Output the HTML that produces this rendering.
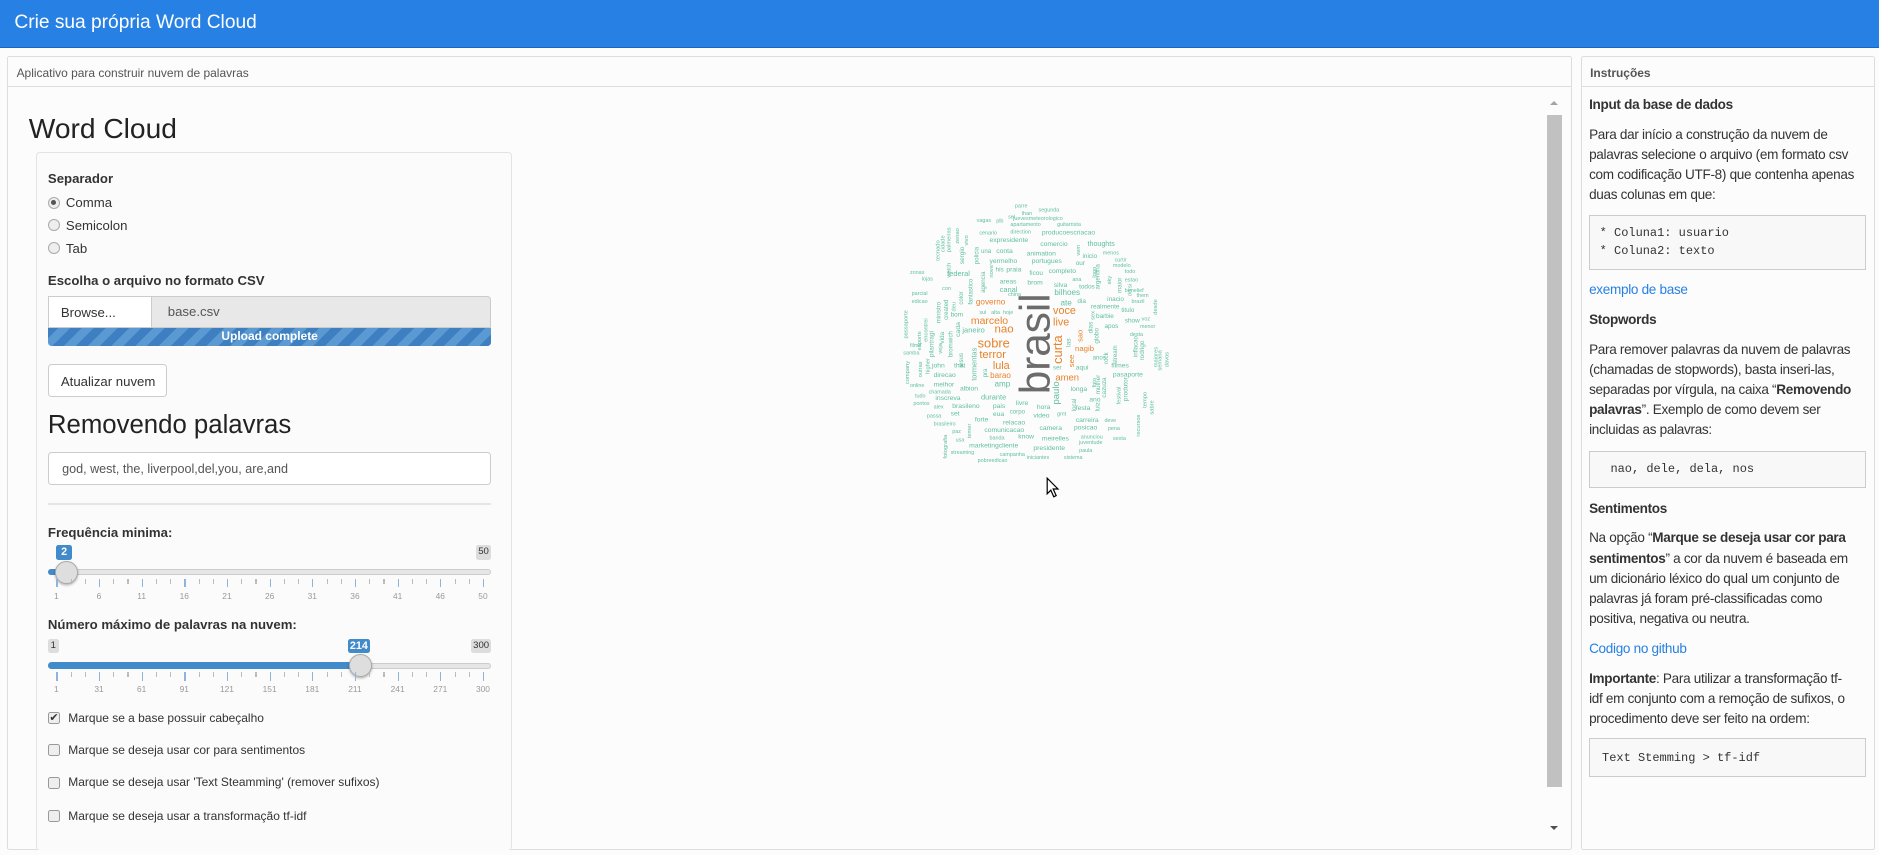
<!DOCTYPE html>
<html><head><meta charset="utf-8"><style>
*{box-sizing:border-box;margin:0;padding:0}
html,body{width:1879px;height:855px;overflow:hidden;background:#fcfcfc}
#w{zoom:1.1984;width:1568px;height:714px;position:relative;font-family:"Liberation Sans",Arial,sans-serif;color:#333}
.a{position:absolute;white-space:nowrap}
.nav{left:0;top:0;width:1568px;height:40px;background:#2780e3;border-bottom:1px solid #1967be}
.nav span{position:absolute;left:12px;top:10px;color:#fff;font-size:16px}
.panel{border:1px solid #ddd;background:#fcfcfc;border-radius:2px}
.ph{position:absolute;left:0;right:0;top:0;height:25px;border-bottom:1px solid #ddd;font-size:10px;color:#555;padding:7px 0 0 7px}
.b{font-weight:bold;font-size:11px}
.t{font-size:11px}
.rad{width:10px;height:10px;border:1px solid #aaa;border-radius:50%;background:#eee}
.chk{width:10px;height:10px;border:1px solid #999;border-radius:2px;background:#eee}
.tick{position:absolute;width:1px}
.tl{position:absolute;font-size:7px;color:#999;transform:translateX(-50%)}
.ins{font-family:"Liberation Sans",sans-serif;font-size:11.3px;letter-spacing:-0.25px;color:#333;line-height:16.7px}
.pre{border:1px solid #ccc;background:#f8f8f8;font-family:"Liberation Mono",monospace;font-size:10px;color:#333}
</style></head><body><div id="w">
<div class="a nav"><span>Crie sua própria Word Cloud</span></div>

<div class="a panel" style="left:6px;top:47px;width:1306px;height:662px">
<div class="ph">Aplicativo para construir nuvem de palavras</div>
</div>
<div class="a" style="left:24px;top:94px;font-size:23.5px;color:#222">Word Cloud</div>
<div class="a" style="left:30px;top:127px;width:397px;height:582px;border:1px solid #e3e3e3;border-bottom:none;border-radius:3px;background:#fbfbfb"></div>

<div class="a b" style="left:40px;top:143px">Separador</div>
<div class="a rad" style="left:40px;top:164px"><div style="width:4px;height:4px;background:#555;border-radius:50%;margin:2px"></div></div>
<div class="a t" style="left:55px;top:163px">Comma</div>
<div class="a rad" style="left:40px;top:183px"></div><div class="a t" style="left:55px;top:182px">Semicolon</div>
<div class="a rad" style="left:40px;top:202px"></div><div class="a t" style="left:55px;top:201px">Tab</div>
<div class="a b" style="left:40px;top:228px">Escolha o arquivo no formato CSV</div>
<div class="a" style="left:40px;top:247px;width:370px;height:27px;border:1px solid #ccc;background:#e8e8e8;border-radius:3px 3px 0 0"></div>
<div class="a t" style="left:40px;top:247px;width:87px;height:27px;border:1px solid #ccc;background:#fff;padding:7px 0 0 10px">Browse...</div>
<div class="a t" style="left:140px;top:254px;color:#555">base.csv</div>
<div class="a" style="left:40px;top:274px;width:370px;height:15px;border-radius:0 0 3px 3px;background:repeating-linear-gradient(-45deg,#3d7fc0 0 7px,#5b99d3 7px 14px);color:#fff;font-size:10px;font-weight:bold;text-align:center;line-height:15px">Upload complete</div>
<div class="a t" style="left:40px;top:304px;width:99px;height:27px;border:1px solid #ccc;background:#fff;border-radius:3px;padding:7px 0 0 10px">Atualizar nuvem</div>
<div class="a" style="left:40px;top:343px;font-size:21.5px;color:#222">Removendo palavras</div>
<div class="a t" style="left:40px;top:377px;width:370px;height:28px;border:1px solid #ccc;border-radius:3px;background:#fff;padding:8px 0 0 11px;color:#555;font-size:10.5px">god, west, the, liverpool,del,you, are,and</div>
<div class="a" style="left:40px;top:420px;width:370px;height:1px;background:#e5e5e5"></div>

<div class="a b" style="left:40px;top:438px">Frequência minima:</div>
<div class="a" style="left:47px;top:455px;width:13px;height:12px;background:#428bca;color:#fff;font-size:9px;font-weight:bold;text-align:center;line-height:12px;border-radius:2px">2</div>
<div class="a" style="left:397px;top:455px;width:13px;height:12px;background:#ddd;color:#333;font-size:8px;text-align:center;line-height:12px;border-radius:2px">50</div>
<div class="a" style="left:40px;top:475px;width:370px;height:5px;background:#e6e6e6;border:1px solid #ccc;border-radius:3px"></div>
<div class="a" style="left:40px;top:475px;width:15px;height:5px;background:#428bca;border-radius:3px"></div>
<div class="a" style="left:46px;top:468px;width:19px;height:19px;border-radius:50%;background:#dedede;border:1px solid #aaa;box-shadow:0 1px 2px rgba(0,0,0,.3)"></div>

<div class="a b" style="left:40px;top:515px">Número máximo de palavras na nuvem:</div>
<div class="a" style="left:40px;top:533px;width:9px;height:12px;background:#ddd;font-size:8px;text-align:center;line-height:12px;border-radius:2px">1</div>
<div class="a" style="left:290px;top:533px;width:19px;height:12px;background:#428bca;color:#fff;font-size:9px;font-weight:bold;text-align:center;line-height:12px;border-radius:2px">214</div>
<div class="a" style="left:393px;top:533px;width:17px;height:12px;background:#ddd;font-size:8px;text-align:center;line-height:12px;border-radius:2px">300</div>
<div class="a" style="left:40px;top:553px;width:370px;height:5px;background:#e6e6e6;border:1px solid #ccc;border-radius:3px"></div>
<div class="a" style="left:40px;top:552px;width:261px;height:6px;background:#428bca;border-radius:3px"></div>
<div class="a" style="left:291px;top:546px;width:19px;height:19px;border-radius:50%;background:#dedede;border:1px solid #aaa;box-shadow:0 1px 2px rgba(0,0,0,.3)"></div>

<div id="ticks"></div>

<div class="a chk" style="left:40px;top:594px;text-align:center;font-size:9px;line-height:9px">✔</div><div class="a t" style="left:57px;top:593px;font-size:10px">Marque se a base possuir cabeçalho</div>
<div class="a chk" style="left:40px;top:621px"></div><div class="a t" style="left:57px;top:620px;font-size:10px">Marque se deseja usar cor para sentimentos</div>
<div class="a chk" style="left:40px;top:648px"></div><div class="a t" style="left:57px;top:647px;font-size:10px">Marque se deseja usar 'Text Steamming' (remover sufixos)</div>
<div class="a chk" style="left:40px;top:676px"></div><div class="a t" style="left:57px;top:675px;font-size:10px">Marque se deseja usar a transformação tf-idf</div>

<div class="a" style="left:1291px;top:96px;width:12px;height:561px;background:#c1c1c1"></div>
<div class="a" style="left:1293px;top:84px;width:0;height:0;border-left:4px solid transparent;border-right:4px solid transparent;border-bottom:4px solid #a3a3a3"></div>
<div class="a" style="left:1293px;top:689px;width:0;height:0;border-left:4px solid transparent;border-right:4px solid transparent;border-top:4px solid #505050"></div>

<svg class="a" style="left:873px;top:398px" width="12" height="18" viewBox="0 0 12 18"><path d="M1 1 L1 14 L4 11 L6.5 16.5 L8.5 15.5 L6 10 L10 10 Z" fill="#fff" stroke="#000" stroke-width="1"/></svg>

<svg class="a" style="left:741px;top:157px" width="254" height="254" viewBox="0 0 900 900" font-family="Liberation Sans,Arial,sans-serif">
<g fill="#5fbf9f" font-size="16">
<text x="375" y="58">parre</text><text x="445" y="70">segunda</text><text x="395" y="80">than</text><text x="262" y="100">vagas</text><text x="320" y="102">plb</text><text x="355" y="90">sel</text><text x="370" y="95">juevesmeteorologico</text><text x="362" y="112">apartamento</text><text x="500" y="112">guitarrista</text><text x="270" y="137">cenario</text><text x="362" y="134">direction</text><text x="455" y="137" font-size="20">producoescriacao</text><text x="300" y="160" font-size="20">expresidente</text><text x="450" y="172" font-size="20">comercio</text><text x="590" y="172" font-size="21">thoughts</text><text x="275" y="192" font-size="18">una</text><text x="320" y="192" font-size="20">conta</text><text x="410" y="200" font-size="20">animation</text><text x="575" y="207" font-size="19">inicio</text><text x="635" y="197">menos</text><text x="555" y="227" font-size="19">our</text><text x="670" y="217">curtir</text><text x="300" y="222" font-size="20">yermelho</text><text x="425" y="222" font-size="20">portugues</text><text x="665" y="234">modelo</text><text x="318" y="247" font-size="19">his</text><text x="350" y="247" font-size="20">praia</text><text x="418" y="257" font-size="19">ficou</text><text x="475" y="252" font-size="20">completo</text><text x="700" y="252">todo</text><text x="175" y="260" font-size="22">federal</text><text x="65" y="255">zonas</text><text x="100" y="274">lojas</text><text x="330" y="282" font-size="20">areas</text><text x="412" y="285" font-size="20">brom</text><text x="490" y="292" font-size="20">silva</text><text x="565" y="297" font-size="19">todos</text><text x="545" y="275">ana</text><text x="700" y="277">estao</text><text x="330" y="307" font-size="22">canal</text><text x="492" y="317" font-size="24">bilhoes</text><text x="700" y="307">benelief</text><text x="735" y="322">them</text><text x="70" y="317">parcial</text><text x="160" y="302">con</text><text x="720" y="340">brazil</text><text x="70" y="340">edicao</text><text x="510" y="347" font-size="24">ate</text><text x="560" y="340" font-size="19">dia</text><text x="648" y="334" font-size="19">inacio</text><text x="600" y="357" font-size="19">realmente</text><text x="690" y="367" font-size="18">titulo</text><text x="270" y="372">sul</text><text x="305" y="372">alta</text><text x="340" y="372">hoje</text><text x="355" y="320">china</text><text x="185" y="380" font-size="19">bom</text><text x="615" y="385" font-size="19">barbie</text><text x="700" y="397" font-size="19">show</text><text x="640" y="414" font-size="19">apos</text><text x="750" y="392">voz</text><text x="220" y="427" font-size="22">janeiro</text><text x="745" y="414">menor</text><text x="715" y="437">desta</text><text x="605" y="507" font-size="18">anos</text><text x="660" y="530" font-size="20">filmes</text><text x="195" y="530" font-size="20">that</text><text x="130" y="530" font-size="20">john</text><text x="555" y="537" font-size="20">aqui</text><text x="488" y="537" font-size="18">ser</text><text x="65" y="470">filme</text><text x="45" y="492">samba</text><text x="665" y="557" font-size="20">pasaporte</text><text x="135" y="559" font-size="20">direcao</text><text x="315" y="587" font-size="24">amp</text><text x="135" y="587" font-size="20">melhor</text><text x="213" y="599" font-size="20">albion</text><text x="540" y="600" font-size="20">longa</text><text x="65" y="589">online</text><text x="80" y="619">tudo</text><text x="120" y="607">chamada</text><text x="275" y="625" font-size="22">durante</text><text x="140" y="627" font-size="20">inscreva</text><text x="595" y="632" font-size="20">ano</text><text x="75" y="642">pontos</text><text x="190" y="650" font-size="20">brasileno</text><text x="310" y="650" font-size="20">pais</text><text x="378" y="642" font-size="20">livre</text><text x="440" y="654" font-size="20">hora</text><text x="555" y="657" font-size="20">festa</text><text x="135" y="652">alex</text><text x="185" y="672" font-size="20">set</text><text x="310" y="674" font-size="20">eua</text><text x="360" y="667" font-size="18">corpo</text><text x="430" y="679" font-size="20">video</text><text x="500" y="672">gmt</text><text x="555" y="692" font-size="20">carreira</text><text x="115" y="679">passa</text><text x="257" y="690" font-size="20">forte</text><text x="340" y="700" font-size="20">relacao</text><text x="640" y="692">deve</text><text x="448" y="715" font-size="20">camera</text><text x="550" y="714" font-size="20">posicao</text><text x="650" y="715">pena</text><text x="135" y="702">brasileiro</text><text x="285" y="722" font-size="20">comunicacao</text><text x="190" y="724">paz</text><text x="385" y="740" font-size="20">know</text><text x="200" y="750">usa</text><text x="455" y="747" font-size="20">meirelles</text><text x="570" y="740">anunciou</text><text x="665" y="745">sexta</text><text x="300" y="744">banda</text><text x="240" y="767" font-size="20">marketingcliente</text><text x="430" y="774" font-size="20">presidente</text><text x="565" y="757">juventude</text><text x="565" y="780">paula</text><text x="185" y="787">streaming</text><text x="330" y="792">campanha</text><text x="520" y="802">sistema</text><text x="410" y="802">iniciantes</text><text x="265" y="810">pobreedicao</text>
</g>
<g fill="#5fbf9f" font-size="17">
<text transform="translate(267,225) rotate(-90)" font-size="18">policia</text><text transform="translate(225,225) rotate(-90)" font-size="19">sergio</text><text transform="translate(237,170) rotate(-90)">vivo</text><text transform="translate(210,165) rotate(-90)">zenao</text><text transform="translate(185,190) rotate(-90)">palmeiras</text><text transform="translate(167,190) rotate(-90)">cidade</text><text transform="translate(153,215) rotate(-90)">tecnado</text><text transform="translate(185,265) rotate(-90)">watch</text><text transform="translate(155,400) rotate(-90)" font-size="18">ministro</text><text transform="translate(222,345) rotate(-90)" font-size="18">color</text><text transform="translate(200,365) rotate(-90)">deu</text><text transform="translate(250,345) rotate(-90)" font-size="18">fantastico</text><text transform="translate(287,310) rotate(-90)" font-size="18">agencia</text><text transform="translate(178,390) rotate(-90)" font-size="18">created</text><text transform="translate(292,560) rotate(-90)" font-size="18">pra</text><text transform="translate(222,530) rotate(-90)" font-size="18">jesus</text><text transform="translate(213,440) rotate(-90)" font-size="20">cada</text><text transform="translate(165,460) rotate(-90)" font-size="19">vida</text><text transform="translate(117,455) rotate(-90)">encontrei</text><text transform="translate(97,480) rotate(-90)">esporte</text><text transform="translate(57,445) rotate(-90)">passaporte</text><text transform="translate(135,500) rotate(-90)" font-size="19">pilantragi</text><text transform="translate(160,490) rotate(-90)">veja</text><text transform="translate(190,500) rotate(-90)" font-size="18">bromwich</text><text transform="translate(100,560) rotate(-90)">outras</text><text transform="translate(122,550) rotate(-90)">higher</text><text transform="translate(62,580) rotate(-90)">company</text><text transform="translate(625,300) rotate(-90)" font-size="18">argentina</text><text transform="translate(615,265) rotate(-90)">logo</text><text transform="translate(605,430) rotate(-90)" font-size="19">dias</text><text transform="translate(610,390) rotate(-90)">sex</text><text transform="translate(622,460) rotate(-90)" font-size="19">globo</text><text transform="translate(650,520) rotate(-90)" font-size="18">rock</text><text transform="translate(677,520) rotate(-90)" font-size="18">stream</text><text transform="translate(627,610) rotate(-90)" font-size="19">mulher</text><text transform="translate(645,620) rotate(-90)" font-size="19">cazuza</text><text transform="translate(625,660) rotate(-90)" font-size="18">luiz</text><text transform="translate(708,630) rotate(-90)" font-size="19">produtor</text><text transform="translate(687,640) rotate(-90)">festival</text><text transform="translate(737,500) rotate(-90)" font-size="18">inflacao</text><text transform="translate(757,510) rotate(-90)" font-size="19">rodrigo</text><text transform="translate(175,800) rotate(-90)">fotografia</text><text transform="translate(245,740) rotate(-90)">temer</text><text transform="translate(556,660) rotate(-90)" font-size="18">local</text><text transform="translate(615,590) rotate(-90)">foto</text><text transform="translate(745,735) rotate(-90)">recursos</text><text transform="translate(785,670) rotate(-90)">sabre</text><text transform="translate(765,650) rotate(-90)">tempo</text><text transform="translate(797,530) rotate(-90)">maiores</text><text transform="translate(808,540) rotate(-90)">semana</text><text transform="translate(830,530) rotate(-90)">davos</text><text transform="translate(690,310) rotate(-90)" font-size="18">maior</text><text transform="translate(720,320) rotate(-90)">dorsi</text><text transform="translate(540,470) rotate(-90)" font-size="20">las</text><text transform="translate(505,640) rotate(-90)" font-size="28">paulo</text><text transform="translate(262,570) rotate(-90)" font-size="22">tormentas</text><text transform="translate(795,375) rotate(-90)">desde</text><text transform="translate(660,285) rotate(-90)">sky</text><text transform="translate(567,200) rotate(-90)">vem</text><text transform="translate(310,265) rotate(-90)">nova</text>
</g>
<g fill="#e8822a">
<text x="260" y="344" font-size="24">governo</text><text x="245" y="402" font-size="31">marcelo</text><text x="488" y="372" font-size="32">voce</text><text x="315" y="427" font-size="34">nao</text><text x="488" y="407" font-size="32">live</text><text x="265" y="472" font-size="38">sobre</text><text x="553" y="482" font-size="23">nagib</text><text x="270" y="502" font-size="33">terror</text><text x="310" y="535" font-size="32">lula</text><text x="302" y="562" font-size="24">barao</text><text x="495" y="569" font-size="28">amen</text>
<text transform="translate(515,520) rotate(-90)" font-size="38">curta</text><text transform="translate(550,530) rotate(-90)" font-size="23">see</text><text transform="translate(575,455) rotate(-90)" font-size="22">sao</text>
</g>
<text transform="translate(478,610) rotate(-90)" font-size="125" fill="#6b6b6b">brasil</text>
</svg>

<div class="a panel" style="left:1319px;top:47px;width:246px;height:662px">
<div class="ph" style="font-weight:bold">Instruções</div>
</div>
<div class="a ins" style="left:1326px;top:79px;font-weight:bold">Input da base de dados</div>
<div class="a ins" style="left:1326px;top:104px">Para dar início a construção da nuvem de<br>palavras selecione o arquivo (em formato csv<br>com codificação UTF-8) que contenha apenas<br>duas colunas em que:</div>
<div class="a pre" style="left:1326px;top:179px;width:231px;height:46px;padding:8px 0 0 8px;line-height:15px">* Coluna1: usuario<br>* Coluna2: texto</div>
<div class="a ins" style="left:1326px;top:234px;color:#2780e3">exemplo de base</div>
<div class="a ins" style="left:1326px;top:259px;font-weight:bold">Stopwords</div>
<div class="a ins" style="left:1326px;top:284px">Para remover palavras da nuvem de palavras<br>(chamadas de stopwords), basta inseri-las,<br>separadas por vírgula, na caixa “<b>Removendo</b><br><b>palavras</b>”. Exemplo de como devem ser<br>incluidas as palavras:</div>
<div class="a pre" style="left:1326px;top:376px;width:231px;height:31px;padding:9px 0 0 17px">nao, dele, dela, nos</div>
<div class="a ins" style="left:1326px;top:416px;font-weight:bold">Sentimentos</div>
<div class="a ins" style="left:1326px;top:441px">Na opção “<b>Marque se deseja usar cor para</b><br><b>sentimentos</b>” a cor da nuvem é baseada em<br>um dicionário léxico do qual um conjunto de<br>palavras já foram pré-classificadas como<br>positiva, negativa ou neutra.</div>
<div class="a ins" style="left:1326px;top:533px;color:#2780e3">Codigo no github</div>
<div class="a ins" style="left:1326px;top:558px"><b>Importante</b>: Para utilizar a transformação tf-<br>idf em conjunto com a remoção de sufixos, o<br>procedimento deve ser feito na ordem:</div>
<div class="a pre" style="left:1326px;top:616px;width:231px;height:32px;padding:10px 0 0 10px">Text Stemming &gt; tf-idf</div>

<script>
(function(){var h='';function s(y,lab){for(var i=0;i<=30;i++){var x=47+356*i/30;var big=i%3==0;h+='<div class="tick" style="left:'+x+'px;top:'+y+'px;height:'+(big?7:4)+'px;background:'+(big?'#8fb4dc':'#bbb')+'"></div>';}
for(var j=0;j<lab.length;j++){h+='<div class="tl" style="left:'+(47+356*j/(lab.length-1))+'px;top:'+(y+10)+'px">'+lab[j]+'</div>';}}
s(483,[1,6,11,16,21,26,31,36,41,46,50]);s(561,[1,31,61,91,121,151,181,211,241,271,300]);document.getElementById('ticks').innerHTML=h;})();
</script>
</div></body></html>
